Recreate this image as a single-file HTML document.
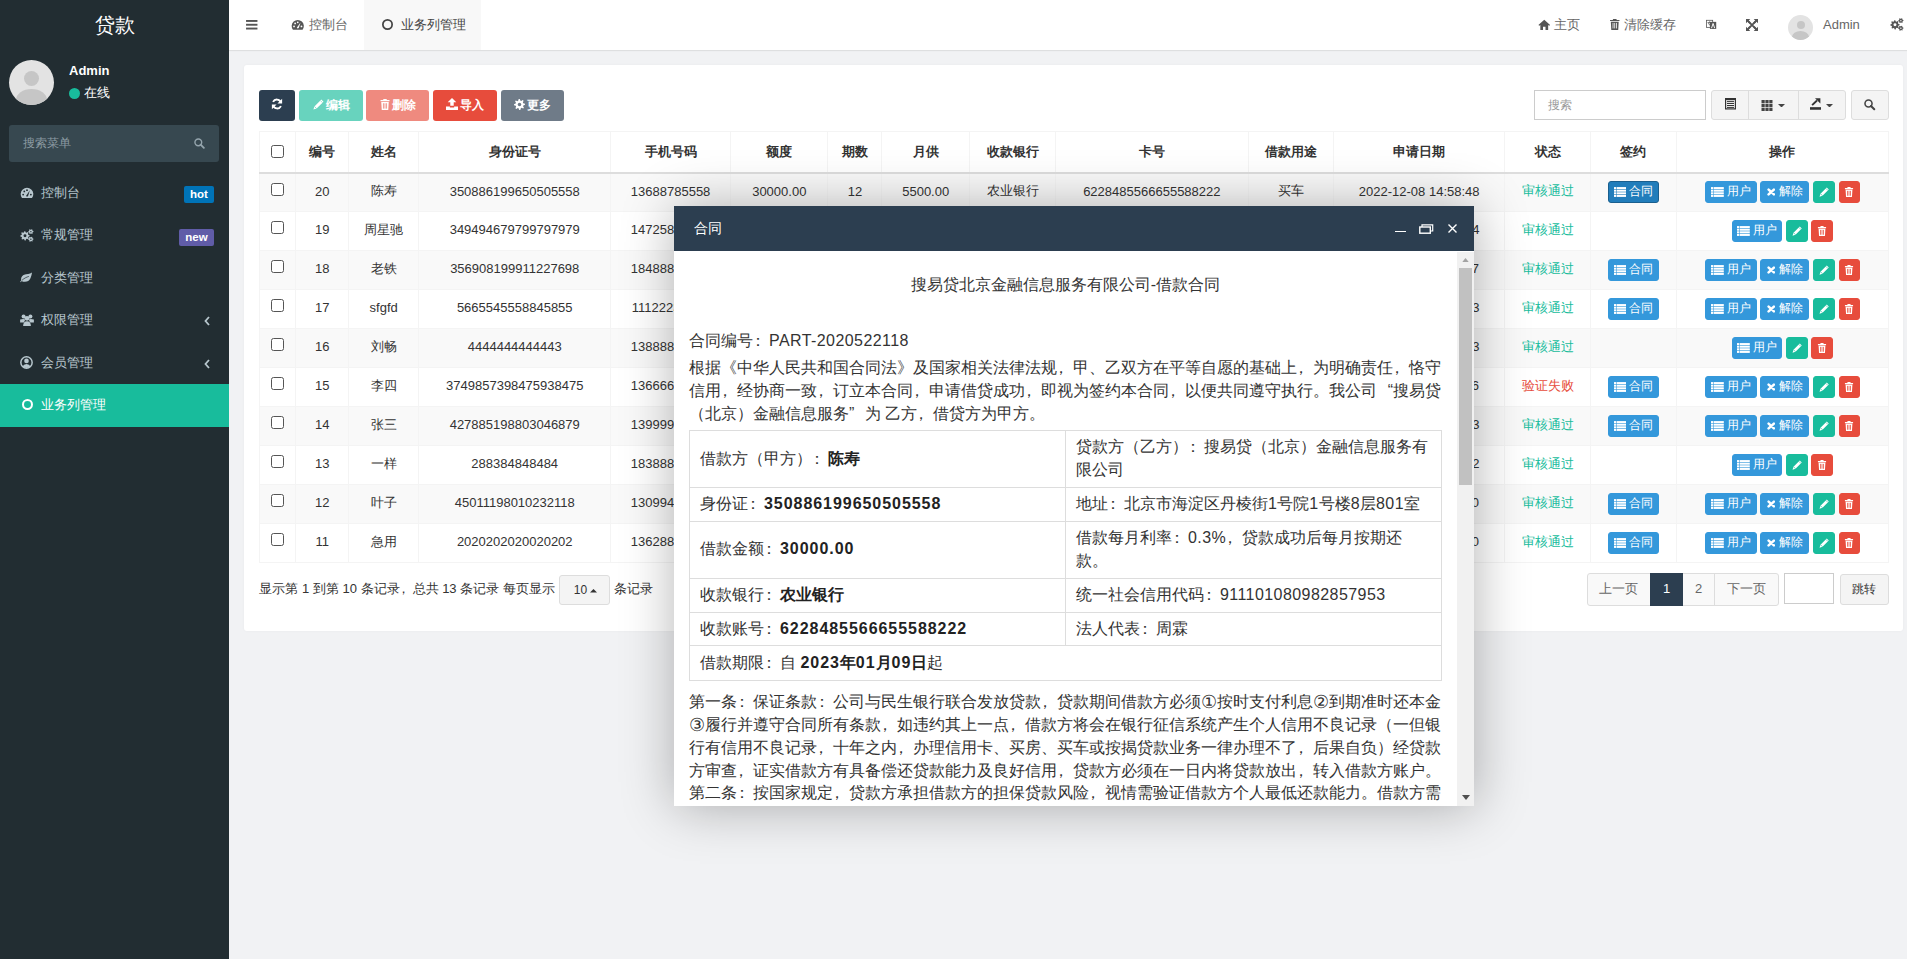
<!DOCTYPE html><html><head><meta charset="utf-8"><style>*{box-sizing:border-box}
html,body{margin:0;padding:0}
body{width:1907px;height:959px;overflow:hidden;position:relative;background:#f1f2f4;font-family:"Liberation Sans",sans-serif;font-size:13px;color:#333}
.abs{position:absolute}
#sb{position:absolute;left:0;top:0;width:229px;height:959px;background:#222d32}
#logo{position:absolute;left:0;top:0;width:229px;height:50px;line-height:50px;text-align:center;color:#fff;font-size:20px}
.av{position:absolute;border-radius:50%;background:#e3e3e3;overflow:hidden}
.av .hd{position:absolute;border-radius:50%;background:#c6c6c6}
.av .bd{position:absolute;border-radius:50%;background:#c6c6c6}
.menu{position:absolute;left:0;width:229px;height:42.5px;color:#b8c7ce;font-size:13px}
.menu .ic{position:absolute;left:20px;top:14px}
.menu .tx{position:absolute;left:41px;top:0;line-height:42.5px}
.menu.on{background:#18bc9c;color:#fff}
.lbl{position:absolute;right:15px;height:17px;line-height:17px;font-size:11.5px;font-weight:bold;color:#fff;border-radius:2px;text-align:center}
#hd{position:absolute;left:229px;top:0;width:1678px;height:50px;background:#fff;box-shadow:0 1px 1px rgba(0,0,0,.08)}
.nav{position:absolute;top:0;height:50px;line-height:50px;color:#666;font-size:13px}
#panel{position:absolute;left:244px;top:65px;width:1659px;height:566px;background:#fff;border-radius:3px;box-shadow:0 0 3px rgba(0,0,0,.04)}
.tb{position:absolute;top:90px;height:30.5px;border-radius:3px;color:#fff;font-size:12px;line-height:30.5px}
.tb svg{display:inline-block!important;vertical-align:-1px}
table.dt{position:absolute;left:259.4px;top:131.3px;border-collapse:collapse;table-layout:fixed;width:1629px}
.dt th{height:41px;font-weight:bold;text-align:center;border-left:1px solid #f4f4f4;border-right:1px solid #f4f4f4;border-top:1px solid #f4f4f4;border-bottom:2px solid #ddd;padding:0;font-size:13px;color:#333}
.dt td{height:39px;text-align:center;border:1px solid #f4f4f4;padding:0 0 3px 0;white-space:nowrap;overflow:hidden;font-size:13px;color:#333}
.dt tr.odd td{background:#f9f9f9}
.cb{display:inline-block;width:13px;height:13px;border:1px solid #555;border-radius:2.5px;background:#fff;vertical-align:middle}
.bx{position:relative;top:1px;display:inline-block;height:22px;line-height:20px;font-size:12px;color:#fff;border-radius:3px;vertical-align:middle;border:1px solid transparent;text-align:left;margin:0}
.bx svg{display:inline-block!important;vertical-align:-1px}
.binfo{background:#3498db;border-color:#3498db}
.bsucc{background:#18bc9c;border-color:#18bc9c}
.bdang{background:#e74c3c;border-color:#e74c3c}
.ok{color:#18bc9c}.fail{color:#e74c3c}
#modal{position:absolute;left:674px;top:206px;width:800px;height:600px;background:#fff;box-shadow:1px 1px 50px rgba(0,0,0,.3)}
#mtitle{position:absolute;left:0;top:0;width:800px;height:45px;background:#2c3e50;color:#fff;font-size:14px;line-height:44px;padding-left:20px}
#mbody{position:absolute;left:0;top:45px;width:783px;height:555px;overflow:hidden}
#mscroll{position:absolute;left:783px;top:46px;width:17px;height:554px;background:#f1f1f1}
.mc{position:absolute;left:15px;width:753px;font-size:16px;line-height:22.86px;color:#333}
table.ct{position:absolute;left:15px;border-collapse:collapse;table-layout:fixed;width:752px}
.ct td{border:1px solid #ddd;padding:5px 10px;font-size:16px;line-height:22.86px;vertical-align:middle;color:#333}
.ct b{font-weight:bold;color:#222}
.ql{display:inline-block;width:16px;text-align:right}
.qr{display:inline-block;width:16px;text-align:left}
.ls{letter-spacing:.43px}
.lsb{letter-spacing:.95px}
.cn{display:inline-block;width:16px;text-align:center;transform:scale(1.12)}
.pc{position:relative;left:-4.5px}.pk{position:relative;left:-3.5px}
</style></head><body><div id="sb"><div id="logo" style="left:0.5px">贷款</div><div class="av" style="left:9px;top:60px;width:45px;height:45px"><div class="hd" style="left:15px;top:11px;width:15px;height:15px"></div><div class="bd" style="left:7px;top:29px;width:31px;height:22px"></div></div><div class="abs" style="left:69px;top:62px;color:#fff;font-weight:bold;font-size:13px;line-height:18px">Admin</div><div class="abs" style="left:69px;top:88px;width:11px;height:11px;border-radius:50%;background:#18bc9c"></div><div class="abs" style="left:84px;top:84px;color:#fff;font-size:13px;line-height:18px">在线</div><div class="abs" style="left:9px;top:125px;width:210px;height:36.5px;background:#374850;border-radius:3px"></div><div class="abs" style="left:23px;top:134px;color:#8c9ba2;font-size:12px;line-height:19px">搜索菜单</div><div class="abs" style="left:194px;top:138px"><svg width="11" height="11" viewBox="0 0 14 14" style="display:block;"><circle cx="5.5" cy="5.5" r="4.3" fill="none" stroke="#95a5ad" stroke-width="1.8"/><path d="M8.5 8.5 L12.5 12.5" stroke="#95a5ad" stroke-width="2.4" stroke-linecap="round"/></svg></div><div class="menu" style="top:171.5px"><div class="ic" style="top:15.75px;left:20px"><svg width="14" height="11" viewBox="0 0 16 12.5" style="display:block;"><path d="M2.3 12.5 A7.2 7.2 0 1 1 13.7 12.5 Z" fill="#b8c7ce"/><circle cx="3.6" cy="8.6" r="1.05" fill="#222d32"/><circle cx="4.9" cy="5" r="1.05" fill="#222d32"/><circle cx="8" cy="3.6" r="1.05" fill="#222d32"/><circle cx="12.4" cy="8.6" r="1.05" fill="#222d32"/><path d="M11.3 3.8 L9.2 10.3 Q8 11.5 6.9 10.2 Z" fill="#222d32"/></svg></div><div class="tx">控制台</div><div class="lbl" style="left:184px;top:14.5px;width:30px;background:#0073b7">hot</div></div><div class="menu" style="top:214.0px"><div class="ic" style="top:14.75px;left:20px"><svg width="14" height="13" viewBox="0 0 17.2 16.8" style="display:block;"><polygon points="11.94,7.92 11.99,9.09 10.37,9.89 10.07,10.72 10.82,12.37 10.03,13.25 8.31,12.66 7.52,13.04 6.88,14.74 5.71,14.79 4.91,13.17 4.08,12.87 2.43,13.62 1.55,12.83 2.14,11.11 1.76,10.32 0.06,9.68 0.01,8.51 1.63,7.71 1.93,6.88 1.18,5.23 1.97,4.35 3.69,4.94 4.48,4.56 5.12,2.86 6.29,2.81 7.09,4.43 7.92,4.73 9.57,3.98 10.45,4.77 9.86,6.49 10.24,7.28" fill="#b8c7ce"/><circle cx="6" cy="8.8" r="1.9" fill="#222d32"/><polygon points="16.93,2.74 16.99,3.62 15.97,4.20 15.68,4.79 15.84,5.96 15.10,6.45 14.09,5.85 13.44,5.89 12.51,6.62 11.71,6.23 11.72,5.05 11.36,4.51 10.27,4.06 10.21,3.18 11.23,2.60 11.52,2.01 11.36,0.84 12.10,0.35 13.11,0.95 13.76,0.91 14.69,0.18 15.49,0.57 15.48,1.75 15.84,2.29" fill="#b8c7ce"/><circle cx="13.6" cy="3.4" r="0.9" fill="#222d32"/><polygon points="16.93,12.54 16.99,13.42 15.97,14.00 15.68,14.59 15.84,15.76 15.10,16.25 14.09,15.65 13.44,15.69 12.51,16.42 11.71,16.03 11.72,14.85 11.36,14.31 10.27,13.86 10.21,12.98 11.23,12.40 11.52,11.81 11.36,10.64 12.10,10.15 13.11,10.75 13.76,10.71 14.69,9.98 15.49,10.37 15.48,11.55 15.84,12.09" fill="#b8c7ce"/><circle cx="13.6" cy="13.2" r="0.9" fill="#222d32"/></svg></div><div class="tx">常规管理</div><div class="lbl" style="left:179px;top:14.5px;width:35px;background:#605ca8">new</div></div><div class="menu" style="top:256.5px"><div class="ic" style="top:15.75px;left:20px"><svg width="13" height="11" viewBox="0 0 16 14" style="display:block;"><path d="M15 0.5 C14 6 13 12 6 12.5 C4 12.6 2.8 12 2 11.3 L0.6 13 L0 12.3 L1.4 10.6 C0.8 9 1.2 5 5 3.5 C8 2.3 12 3 15 0.5 Z" fill="#b8c7ce"/><path d="M2.2 10.6 C5 8 8 6.5 11 5.6" stroke="#222d32" stroke-width="0.9" fill="none"/></svg></div><div class="tx">分类管理</div></div><div class="menu" style="top:299.0px"><div class="ic" style="top:15.25px;left:20px"><svg width="14" height="12" viewBox="0 0 16 14" style="display:block;"><circle cx="4" cy="3" r="2.3" fill="#b8c7ce"/><circle cx="12" cy="3" r="2.3" fill="#b8c7ce"/><circle cx="8" cy="5" r="2.8" fill="#b8c7ce"/><path d="M0 6.5 Q4 5 6 6.5 L4.5 10 H0 Z" fill="#b8c7ce"/><path d="M16 6.5 Q12 5 10 6.5 L11.5 10 H16 Z" fill="#b8c7ce"/><path d="M3.5 14 Q3.5 8.5 8 8.5 Q12.5 8.5 12.5 14 Z" fill="#b8c7ce"/></svg></div><div class="tx">权限管理</div><div class="abs" style="left:204px;top:17px"><svg width="6" height="10" viewBox="0 0 6 10" style="display:block;"><path d="M5 1 L1.5 5 L5 9" fill="none" stroke="#b8c7ce" stroke-width="1.8"/></svg></div></div><div class="menu" style="top:341.5px"><div class="ic" style="top:14.75px;left:20px"><svg width="13" height="13" viewBox="0 0 14 14" style="display:block;"><circle cx="7" cy="7" r="6.1" fill="none" stroke="#b8c7ce" stroke-width="1.6"/><circle cx="7" cy="5.3" r="2.5" fill="#b8c7ce"/><path d="M2.8 11.3 Q3.8 8.6 7 8.6 Q10.2 8.6 11.2 11.3 Q7 14.5 2.8 11.3 Z" fill="#b8c7ce"/></svg></div><div class="tx">会员管理</div><div class="abs" style="left:204px;top:17px"><svg width="6" height="10" viewBox="0 0 6 10" style="display:block;"><path d="M5 1 L1.5 5 L5 9" fill="none" stroke="#b8c7ce" stroke-width="1.8"/></svg></div></div><div class="menu on" style="top:384.0px"><div class="ic" style="top:15.25px;left:21.5px"><svg width="11" height="11" viewBox="0 0 12 12" style="display:block;"><circle cx="6" cy="6" r="4.9" fill="none" stroke="#fff" stroke-width="2.2"/></svg></div><div class="tx">业务列管理</div></div></div><div id="hd"><div class="abs" style="left:17px;top:20px"><svg width="11.5" height="9.5" viewBox="0 0 12 10" style="display:block;"><rect x="0" y="0" width="12" height="2" fill="#555"/><rect x="0" y="4" width="12" height="2" fill="#555"/><rect x="0" y="8" width="12" height="2" fill="#555"/></svg></div><div class="abs" style="left:135px;top:0;width:117px;height:50px;background:#f8f8f8"></div><div class="abs" style="left:62px;top:19px"><svg width="13.5" height="11" viewBox="0 0 16 12.5" style="display:block;"><path d="M2.3 12.5 A7.2 7.2 0 1 1 13.7 12.5 Z" fill="#555"/><circle cx="3.6" cy="8.6" r="1.05" fill="#fff"/><circle cx="4.9" cy="5" r="1.05" fill="#fff"/><circle cx="8" cy="3.6" r="1.05" fill="#fff"/><circle cx="12.4" cy="8.6" r="1.05" fill="#fff"/><path d="M11.3 3.8 L9.2 10.3 Q8 11.5 6.9 10.2 Z" fill="#fff"/></svg></div><div class="nav" style="left:80px">控制台</div><div class="abs" style="left:153px;top:19px"><svg width="11" height="11" viewBox="0 0 12 12" style="display:block;"><circle cx="6" cy="6" r="5.05" fill="none" stroke="#444" stroke-width="1.9"/></svg></div><div class="nav" style="left:171.5px;color:#444">业务列管理</div><div class="abs" style="left:1309px;top:19px"><svg width="12.5" height="11" viewBox="0 0 16 14" style="display:block;"><path d="M8 1 L15.5 7.5 L14.3 8.7 L13 7.6 V14 H9.6 V10 H6.4 V14 H3 V7.6 L1.7 8.7 L0.5 7.5 Z" fill="#555"/></svg></div><div class="nav" style="left:1325px">主页</div><div class="abs" style="left:1381px;top:19px"><svg width="9.5" height="11" viewBox="0 0 12 14" style="display:block;"><path d="M4 0 H8 L8.6 1.2 H12 V2.6 H0 V1.2 H3.4 Z M1 3.4 H11 L10.4 14 H1.6 Z" fill="#555"/><rect x="3.3" y="5" width="1" height="7" fill="#fff"/><rect x="5.5" y="5" width="1" height="7" fill="#fff"/><rect x="7.7" y="5" width="1" height="7" fill="#fff"/></svg></div><div class="nav" style="left:1395px">清除缓存</div><div class="abs" style="left:1477px;top:18.5px"><svg width="11" height="12" viewBox="0 0 14 14" style="display:block;"><rect x="0.5" y="1" width="8" height="9" fill="none" stroke="#555" stroke-width="1"/><rect x="5" y="3" width="8" height="9" fill="#555"/><path d="M7 11 L9 5 L11 11" fill="none" stroke="#fff" stroke-width="1.2"/><path d="M2 4 H7 M4.5 2.5 V4 M3 4 Q4 8 7 8" fill="none" stroke="#555" stroke-width="1"/></svg></div><div class="abs" style="left:1517px;top:19px"><svg width="12" height="12" viewBox="0 0 14 14" style="display:block;"><path d="M0 0 H5 L3.3 1.7 L5.6 4 L4 5.6 L1.7 3.3 L0 5 Z M14 0 V5 L12.3 3.3 L10 5.6 L8.4 4 L10.7 1.7 L9 0 Z M0 14 V9 L1.7 10.7 L4 8.4 L5.6 10 L3.3 12.3 L5 14 Z M14 14 H9 L10.7 12.3 L8.4 10 L10 8.4 L12.3 10.7 L14 9 Z" fill="#555"/><path d="M3 3 L11 11 M11 3 L3 11" stroke="#555" stroke-width="2.2"/></svg></div><div class="av" style="left:1559px;top:15px;width:25px;height:25px"><div class="hd" style="left:8.5px;top:6px;width:8px;height:8px"></div><div class="bd" style="left:4px;top:16px;width:17px;height:12px"></div></div><div class="nav" style="left:1594px">Admin</div><div class="abs" style="left:1660.5px;top:18px"><svg width="14" height="13" viewBox="0 0 17.2 16.8" style="display:block;"><polygon points="11.94,7.92 11.99,9.09 10.37,9.89 10.07,10.72 10.82,12.37 10.03,13.25 8.31,12.66 7.52,13.04 6.88,14.74 5.71,14.79 4.91,13.17 4.08,12.87 2.43,13.62 1.55,12.83 2.14,11.11 1.76,10.32 0.06,9.68 0.01,8.51 1.63,7.71 1.93,6.88 1.18,5.23 1.97,4.35 3.69,4.94 4.48,4.56 5.12,2.86 6.29,2.81 7.09,4.43 7.92,4.73 9.57,3.98 10.45,4.77 9.86,6.49 10.24,7.28" fill="#555"/><circle cx="6" cy="8.8" r="1.9" fill="#fff"/><polygon points="16.93,2.74 16.99,3.62 15.97,4.20 15.68,4.79 15.84,5.96 15.10,6.45 14.09,5.85 13.44,5.89 12.51,6.62 11.71,6.23 11.72,5.05 11.36,4.51 10.27,4.06 10.21,3.18 11.23,2.60 11.52,2.01 11.36,0.84 12.10,0.35 13.11,0.95 13.76,0.91 14.69,0.18 15.49,0.57 15.48,1.75 15.84,2.29" fill="#555"/><circle cx="13.6" cy="3.4" r="0.9" fill="#fff"/><polygon points="16.93,12.54 16.99,13.42 15.97,14.00 15.68,14.59 15.84,15.76 15.10,16.25 14.09,15.65 13.44,15.69 12.51,16.42 11.71,16.03 11.72,14.85 11.36,14.31 10.27,13.86 10.21,12.98 11.23,12.40 11.52,11.81 11.36,10.64 12.10,10.15 13.11,10.75 13.76,10.71 14.69,9.98 15.49,10.37 15.48,11.55 15.84,12.09" fill="#555"/><circle cx="13.6" cy="13.2" r="0.9" fill="#fff"/></svg></div></div><div id="panel"></div><div class="tb" style="left:259px;width:36px;background:#2c3e50;opacity:1;text-align:center;display:flex;align-items:center;justify-content:center"><span style="display:inline-block;vertical-align:middle"><svg width="12" height="12" viewBox="0 0 14 14" style="display:block;"><path d="M11.6 5.2 A5 5 0 0 0 2.4 4.6" fill="none" stroke="#fff" stroke-width="2.2"/><path d="M13 1 V6.5 H7.5 Z" fill="#fff"/><path d="M2.4 8.8 A5 5 0 0 0 11.6 9.4" fill="none" stroke="#fff" stroke-width="2.2"/><path d="M1 13 V7.5 H6.5 Z" fill="#fff"/></svg></span></div><div class="tb" style="left:299px;width:64px;background:#18bc9c;opacity:0.65;text-align:center;display:flex;align-items:center;justify-content:center"><span style="display:inline-block;vertical-align:middle"><svg width="11" height="11" viewBox="0 0 14 14" style="display:block;"><path d="M10.6 0.6 L13.4 3.4 L4.6 12.2 L0.5 13.5 L1.8 9.4 Z" fill="#fff"/><path d="M1.8 9.4 L4.6 12.2" stroke="#18bc9c" stroke-width="0.9"/><path d="M9.3 1.9 L12.1 4.7" stroke="#18bc9c" stroke-width="0.8"/></svg></span><span style="vertical-align:middle;margin-left:2px;font-weight:bold">编辑</span></div><div class="tb" style="left:366px;width:63px;background:#e74c3c;opacity:0.65;text-align:center;display:flex;align-items:center;justify-content:center"><span style="display:inline-block;vertical-align:middle"><svg width="10" height="11" viewBox="0 0 12 13.5" style="display:block;"><path d="M4.2 0 H7.8 L8.4 1.3 H11.5 V2.9 H0.5 V1.3 H3.6 Z M1.4 3.6 H10.6 L10 13.5 H2 Z" fill="#fff"/><rect x="3.5" y="5.2" width="1" height="6.6" fill="#e74c3c"/><rect x="5.5" y="5.2" width="1" height="6.6" fill="#e74c3c"/><rect x="7.5" y="5.2" width="1" height="6.6" fill="#e74c3c"/></svg></span><span style="vertical-align:middle;margin-left:2px;font-weight:bold">删除</span></div><div class="tb" style="left:433px;width:64px;background:#e74c3c;opacity:1;text-align:center;display:flex;align-items:center;justify-content:center"><span style="display:inline-block;vertical-align:middle"><svg width="12" height="12" viewBox="0 0 14 14" style="display:block;"><path d="M7 0 L12 5 H9 V9 H5 V5 H2 Z" fill="#fff"/><path d="M0 10 H4.5 V11 H9.5 V10 H14 V14 H0 Z" fill="#fff"/></svg></span><span style="vertical-align:middle;margin-left:2px;font-weight:bold">导入</span></div><div class="tb" style="left:501px;width:63px;background:#6f7b88;opacity:1;text-align:center;display:flex;align-items:center;justify-content:center"><span style="display:inline-block;vertical-align:middle"><svg width="11" height="11" viewBox="0 0 14 14" style="display:block;"><polygon points="13.92,5.97 13.99,7.34 11.85,8.21 11.52,9.14 12.62,11.17 11.70,12.19 9.57,11.29 8.68,11.71 8.03,13.92 6.66,13.99 5.79,11.85 4.86,11.52 2.83,12.62 1.81,11.70 2.71,9.57 2.29,8.68 0.08,8.03 0.01,6.66 2.15,5.79 2.48,4.86 1.38,2.83 2.30,1.81 4.43,2.71 5.32,2.29 5.97,0.08 7.34,0.01 8.21,2.15 9.14,2.48 11.17,1.38 12.19,2.30 11.29,4.43 11.71,5.32" fill="#fff"/><circle cx="7" cy="7" r="2.2" fill="#6f7b88"/></svg></span><span style="vertical-align:middle;margin-left:2px;font-weight:bold">更多</span></div><div class="abs" style="left:1534.3px;top:90.4px;width:171.5px;height:30px;border:1px solid #ccc;background:#fff"></div><div class="abs" style="left:1547.5px;top:96px;font-size:12px;line-height:19px;color:#999">搜索</div><div class="abs" style="left:1711px;top:90.4px;width:135px;height:30px;border:1px solid #ddd;background:#f4f4f4;border-radius:3px"></div><div class="abs" style="left:1748px;top:90.4px;width:1px;height:30px;background:#ddd"></div><div class="abs" style="left:1797.5px;top:90.4px;width:1px;height:30px;background:#ddd"></div><div class="abs" style="left:1725.3px;top:98.3px"><svg width="11" height="11.5" viewBox="0 0 11 11.5" style="display:block;"><rect x="0" y="0" width="11" height="11.5" fill="#333"/><rect x="1.2" y="2" width="8.6" height="8.3" fill="#f4f4f4"/><rect x="2" y="2.8" width="7" height="1.1" fill="#333"/><rect x="2" y="4.9" width="7" height="1.1" fill="#333"/><rect x="2" y="7" width="7" height="1.1" fill="#333"/><rect x="2" y="9" width="7" height="0.9" fill="#333"/></svg></div><div class="abs" style="left:1761px;top:99.5px"><svg width="12" height="11" viewBox="0 0 13 13" style="display:block;"><rect x="0" y="0" width="3.8" height="3.8" fill="#444"/><rect x="0" y="4.6" width="3.8" height="3.8" fill="#444"/><rect x="0" y="9.2" width="3.8" height="3.8" fill="#444"/><rect x="4.6" y="0" width="3.8" height="3.8" fill="#444"/><rect x="4.6" y="4.6" width="3.8" height="3.8" fill="#444"/><rect x="4.6" y="9.2" width="3.8" height="3.8" fill="#444"/><rect x="9.2" y="0" width="3.8" height="3.8" fill="#444"/><rect x="9.2" y="4.6" width="3.8" height="3.8" fill="#444"/><rect x="9.2" y="9.2" width="3.8" height="3.8" fill="#444"/></svg></div><div class="abs" style="left:1777.5px;top:103.5px"><svg width="7" height="3.5" viewBox="0 0 8 4" style="display:block;"><path d="M0 0 L8 0 L4 4 Z" fill="#444"/></svg></div><div class="abs" style="left:1809.8px;top:98px"><svg width="11.5" height="12" viewBox="0 0 12 12" style="display:block;"><rect x="0" y="9.3" width="11.5" height="2.7" fill="#333"/><path d="M2.2 7.2 L7.3 2.4" stroke="#333" stroke-width="2"/><path d="M5.2 0 H10.8 V5.6 Z" fill="#333"/></svg></div><div class="abs" style="left:1825.5px;top:103.5px"><svg width="7" height="3.5" viewBox="0 0 8 4" style="display:block;"><path d="M0 0 L8 0 L4 4 Z" fill="#444"/></svg></div><div class="abs" style="left:1851.2px;top:90.4px;width:37.5px;height:30px;border:1px solid #ddd;background:#f4f4f4;border-radius:3px"></div><div class="abs" style="left:1864px;top:99px"><svg width="11.5" height="11.5" viewBox="0 0 14 14" style="display:block;"><circle cx="5.5" cy="5.5" r="4.3" fill="none" stroke="#444" stroke-width="1.9"/><path d="M8.5 8.5 L12.5 12.5" stroke="#444" stroke-width="2.5" stroke-linecap="round"/></svg></div><table class="dt"><colgroup><col style="width:36px"><col style="width:52.5px"><col style="width:70.5px"><col style="width:191.7px"><col style="width:120px"><col style="width:97.4px"><col style="width:53.9px"><col style="width:87.7px"><col style="width:86.1px"><col style="width:192.4px"><col style="width:85.5px"><col style="width:171.3px"><col style="width:85.6px"><col style="width:85.6px"><col style="width:212.8px"></colgroup><tr><th><span class="cb" style="vertical-align:-1px"></span></th><th>编号</th><th>姓名</th><th>身份证号</th><th>手机号码</th><th>额度</th><th>期数</th><th>月供</th><th>收款银行</th><th>卡号</th><th>借款用途</th><th>申请日期</th><th>状态</th><th>签约</th><th>操作</th></tr><tr class="odd"><td><span class="cb" style="vertical-align:1px"></span></td><td>20</td><td>陈寿</td><td>350886199650505558</td><td>13688785558</td><td>30000.00</td><td>12</td><td>5500.00</td><td>农业银行</td><td>6228485566655588222</td><td>买车</td><td>2022-12-08 14:58:48</td><td><span class="ok">审核通过</span></td><td style="font-size:0"><span class="bx binfo" style="width:51px;background:#217dbb;border-color:#1a5f8e"><span style="position:absolute;left:4.8px;top:0;height:20px;display:flex;align-items:center"><svg width="12.8" height="10" viewBox="0 0 13 10" style="display:block;"><rect x="0" y="0" width="2.4" height="2.05" fill="#fff"/><rect x="2.9" y="0" width="10.1" height="2.05" fill="#fff"/><rect x="0" y="2.65" width="2.4" height="2.05" fill="#fff"/><rect x="2.9" y="2.65" width="10.1" height="2.05" fill="#fff"/><rect x="0" y="5.3" width="2.4" height="2.05" fill="#fff"/><rect x="2.9" y="5.3" width="10.1" height="2.05" fill="#fff"/><rect x="0" y="7.95" width="2.4" height="2.05" fill="#fff"/><rect x="2.9" y="7.95" width="10.1" height="2.05" fill="#fff"/></svg></span><span style="position:absolute;left:20.5px;top:0;line-height:19px">合同</span></span></td><td style="font-size:0"><span class="bx binfo" style="width:51.6px;"><span style="position:absolute;left:4.8px;top:0;height:20px;display:flex;align-items:center"><svg width="12.8" height="10" viewBox="0 0 13 10" style="display:block;"><rect x="0" y="0" width="2.4" height="2.05" fill="#fff"/><rect x="2.9" y="0" width="10.1" height="2.05" fill="#fff"/><rect x="0" y="2.65" width="2.4" height="2.05" fill="#fff"/><rect x="2.9" y="2.65" width="10.1" height="2.05" fill="#fff"/><rect x="0" y="5.3" width="2.4" height="2.05" fill="#fff"/><rect x="2.9" y="5.3" width="10.1" height="2.05" fill="#fff"/><rect x="0" y="7.95" width="2.4" height="2.05" fill="#fff"/><rect x="2.9" y="7.95" width="10.1" height="2.05" fill="#fff"/></svg></span><span style="position:absolute;left:20.8px;top:0;line-height:19px">用户</span></span><span class="bx binfo" style="width:48.4px;margin-left:3.5px"><span style="position:absolute;left:5.4px;top:0;height:20px;display:flex;align-items:center"><svg width="8.5" height="8" viewBox="0 0 8.6 8.2" style="display:block;"><path d="M1.6 1.6 L7 6.6 M7 1.6 L1.6 6.6" stroke="#fff" stroke-width="2.6" stroke-linecap="round"/></svg></span><span style="position:absolute;left:18.2px;top:0;line-height:19px">解除</span></span><span class="bx bsucc" style="width:21.7px;margin-left:4.3px"><span style="position:absolute;left:4.6px;top:0;height:20px;display:flex;align-items:center"><svg width="10.4" height="10" viewBox="0 0 14 14" style="display:block;"><path d="M10.6 0.6 L13.4 3.4 L4.6 12.2 L0.5 13.5 L1.8 9.4 Z" fill="#fff"/><path d="M1.8 9.4 L4.6 12.2" stroke="#18bc9c" stroke-width="0.9"/><path d="M9.3 1.9 L12.1 4.7" stroke="#18bc9c" stroke-width="0.8"/></svg></span></span><span class="bx bdang" style="width:20.6px;margin-left:4.4px"><span style="position:absolute;left:4.1px;top:0;height:20px;display:flex;align-items:center"><svg width="10" height="10" viewBox="0 0 12 13.5" style="display:block;"><path d="M4.2 0 H7.8 L8.4 1.3 H11.5 V2.9 H0.5 V1.3 H3.6 Z M1.4 3.6 H10.6 L10 13.5 H2 Z" fill="#fff"/><rect x="3.5" y="5.2" width="1" height="6.6" fill="#e74c3c"/><rect x="5.5" y="5.2" width="1" height="6.6" fill="#e74c3c"/><rect x="7.5" y="5.2" width="1" height="6.6" fill="#e74c3c"/></svg></span></span></td></tr><tr class=""><td><span class="cb" style="vertical-align:1px"></span></td><td>19</td><td>周星驰</td><td>349494679799797979</td><td>14725836914</td><td>20000.00</td><td>12</td><td>3000.00</td><td>建设银行</td><td>6217000010012345678</td><td>装修</td><td>2022-12-07 10:21:14</td><td><span class="ok">审核通过</span></td><td></td><td style="font-size:0"><span class="bx binfo" style="width:50.5px;"><span style="position:absolute;left:4.8px;top:0;height:20px;display:flex;align-items:center"><svg width="12.8" height="10" viewBox="0 0 13 10" style="display:block;"><rect x="0" y="0" width="2.4" height="2.05" fill="#fff"/><rect x="2.9" y="0" width="10.1" height="2.05" fill="#fff"/><rect x="0" y="2.65" width="2.4" height="2.05" fill="#fff"/><rect x="2.9" y="2.65" width="10.1" height="2.05" fill="#fff"/><rect x="0" y="5.3" width="2.4" height="2.05" fill="#fff"/><rect x="2.9" y="5.3" width="10.1" height="2.05" fill="#fff"/><rect x="0" y="7.95" width="2.4" height="2.05" fill="#fff"/><rect x="2.9" y="7.95" width="10.1" height="2.05" fill="#fff"/></svg></span><span style="position:absolute;left:20.8px;top:0;line-height:19px">用户</span></span><span class="bx bsucc" style="width:21.7px;margin-left:4.2px"><span style="position:absolute;left:4.6px;top:0;height:20px;display:flex;align-items:center"><svg width="10.4" height="10" viewBox="0 0 14 14" style="display:block;"><path d="M10.6 0.6 L13.4 3.4 L4.6 12.2 L0.5 13.5 L1.8 9.4 Z" fill="#fff"/><path d="M1.8 9.4 L4.6 12.2" stroke="#18bc9c" stroke-width="0.9"/><path d="M9.3 1.9 L12.1 4.7" stroke="#18bc9c" stroke-width="0.8"/></svg></span></span><span class="bx bdang" style="width:21.7px;margin-left:3.4px"><span style="position:absolute;left:4.6px;top:0;height:20px;display:flex;align-items:center"><svg width="10" height="10" viewBox="0 0 12 13.5" style="display:block;"><path d="M4.2 0 H7.8 L8.4 1.3 H11.5 V2.9 H0.5 V1.3 H3.6 Z M1.4 3.6 H10.6 L10 13.5 H2 Z" fill="#fff"/><rect x="3.5" y="5.2" width="1" height="6.6" fill="#e74c3c"/><rect x="5.5" y="5.2" width="1" height="6.6" fill="#e74c3c"/><rect x="7.5" y="5.2" width="1" height="6.6" fill="#e74c3c"/></svg></span></span></td></tr><tr class="odd"><td><span class="cb" style="vertical-align:1px"></span></td><td>18</td><td>老铁</td><td>356908199911227698</td><td>18488812347</td><td>50000.00</td><td>24</td><td>2500.00</td><td>工商银行</td><td>6222021234567890127</td><td>旅游</td><td>2022-12-06 09:11:27</td><td><span class="ok">审核通过</span></td><td style="font-size:0"><span class="bx binfo" style="width:51px;"><span style="position:absolute;left:4.8px;top:0;height:20px;display:flex;align-items:center"><svg width="12.8" height="10" viewBox="0 0 13 10" style="display:block;"><rect x="0" y="0" width="2.4" height="2.05" fill="#fff"/><rect x="2.9" y="0" width="10.1" height="2.05" fill="#fff"/><rect x="0" y="2.65" width="2.4" height="2.05" fill="#fff"/><rect x="2.9" y="2.65" width="10.1" height="2.05" fill="#fff"/><rect x="0" y="5.3" width="2.4" height="2.05" fill="#fff"/><rect x="2.9" y="5.3" width="10.1" height="2.05" fill="#fff"/><rect x="0" y="7.95" width="2.4" height="2.05" fill="#fff"/><rect x="2.9" y="7.95" width="10.1" height="2.05" fill="#fff"/></svg></span><span style="position:absolute;left:20.5px;top:0;line-height:19px">合同</span></span></td><td style="font-size:0"><span class="bx binfo" style="width:51.6px;"><span style="position:absolute;left:4.8px;top:0;height:20px;display:flex;align-items:center"><svg width="12.8" height="10" viewBox="0 0 13 10" style="display:block;"><rect x="0" y="0" width="2.4" height="2.05" fill="#fff"/><rect x="2.9" y="0" width="10.1" height="2.05" fill="#fff"/><rect x="0" y="2.65" width="2.4" height="2.05" fill="#fff"/><rect x="2.9" y="2.65" width="10.1" height="2.05" fill="#fff"/><rect x="0" y="5.3" width="2.4" height="2.05" fill="#fff"/><rect x="2.9" y="5.3" width="10.1" height="2.05" fill="#fff"/><rect x="0" y="7.95" width="2.4" height="2.05" fill="#fff"/><rect x="2.9" y="7.95" width="10.1" height="2.05" fill="#fff"/></svg></span><span style="position:absolute;left:20.8px;top:0;line-height:19px">用户</span></span><span class="bx binfo" style="width:48.4px;margin-left:3.5px"><span style="position:absolute;left:5.4px;top:0;height:20px;display:flex;align-items:center"><svg width="8.5" height="8" viewBox="0 0 8.6 8.2" style="display:block;"><path d="M1.6 1.6 L7 6.6 M7 1.6 L1.6 6.6" stroke="#fff" stroke-width="2.6" stroke-linecap="round"/></svg></span><span style="position:absolute;left:18.2px;top:0;line-height:19px">解除</span></span><span class="bx bsucc" style="width:21.7px;margin-left:4.3px"><span style="position:absolute;left:4.6px;top:0;height:20px;display:flex;align-items:center"><svg width="10.4" height="10" viewBox="0 0 14 14" style="display:block;"><path d="M10.6 0.6 L13.4 3.4 L4.6 12.2 L0.5 13.5 L1.8 9.4 Z" fill="#fff"/><path d="M1.8 9.4 L4.6 12.2" stroke="#18bc9c" stroke-width="0.9"/><path d="M9.3 1.9 L12.1 4.7" stroke="#18bc9c" stroke-width="0.8"/></svg></span></span><span class="bx bdang" style="width:20.6px;margin-left:4.4px"><span style="position:absolute;left:4.1px;top:0;height:20px;display:flex;align-items:center"><svg width="10" height="10" viewBox="0 0 12 13.5" style="display:block;"><path d="M4.2 0 H7.8 L8.4 1.3 H11.5 V2.9 H0.5 V1.3 H3.6 Z M1.4 3.6 H10.6 L10 13.5 H2 Z" fill="#fff"/><rect x="3.5" y="5.2" width="1" height="6.6" fill="#e74c3c"/><rect x="5.5" y="5.2" width="1" height="6.6" fill="#e74c3c"/><rect x="7.5" y="5.2" width="1" height="6.6" fill="#e74c3c"/></svg></span></span></td></tr><tr class=""><td><span class="cb" style="vertical-align:1px"></span></td><td>17</td><td>sfgfd</td><td>5665545558845855</td><td>11122233343</td><td>10000.00</td><td>6</td><td>1800.00</td><td>农业银行</td><td>6228481234567891233</td><td>教育</td><td>2022-12-05 16:32:13</td><td><span class="ok">审核通过</span></td><td style="font-size:0"><span class="bx binfo" style="width:51px;"><span style="position:absolute;left:4.8px;top:0;height:20px;display:flex;align-items:center"><svg width="12.8" height="10" viewBox="0 0 13 10" style="display:block;"><rect x="0" y="0" width="2.4" height="2.05" fill="#fff"/><rect x="2.9" y="0" width="10.1" height="2.05" fill="#fff"/><rect x="0" y="2.65" width="2.4" height="2.05" fill="#fff"/><rect x="2.9" y="2.65" width="10.1" height="2.05" fill="#fff"/><rect x="0" y="5.3" width="2.4" height="2.05" fill="#fff"/><rect x="2.9" y="5.3" width="10.1" height="2.05" fill="#fff"/><rect x="0" y="7.95" width="2.4" height="2.05" fill="#fff"/><rect x="2.9" y="7.95" width="10.1" height="2.05" fill="#fff"/></svg></span><span style="position:absolute;left:20.5px;top:0;line-height:19px">合同</span></span></td><td style="font-size:0"><span class="bx binfo" style="width:51.6px;"><span style="position:absolute;left:4.8px;top:0;height:20px;display:flex;align-items:center"><svg width="12.8" height="10" viewBox="0 0 13 10" style="display:block;"><rect x="0" y="0" width="2.4" height="2.05" fill="#fff"/><rect x="2.9" y="0" width="10.1" height="2.05" fill="#fff"/><rect x="0" y="2.65" width="2.4" height="2.05" fill="#fff"/><rect x="2.9" y="2.65" width="10.1" height="2.05" fill="#fff"/><rect x="0" y="5.3" width="2.4" height="2.05" fill="#fff"/><rect x="2.9" y="5.3" width="10.1" height="2.05" fill="#fff"/><rect x="0" y="7.95" width="2.4" height="2.05" fill="#fff"/><rect x="2.9" y="7.95" width="10.1" height="2.05" fill="#fff"/></svg></span><span style="position:absolute;left:20.8px;top:0;line-height:19px">用户</span></span><span class="bx binfo" style="width:48.4px;margin-left:3.5px"><span style="position:absolute;left:5.4px;top:0;height:20px;display:flex;align-items:center"><svg width="8.5" height="8" viewBox="0 0 8.6 8.2" style="display:block;"><path d="M1.6 1.6 L7 6.6 M7 1.6 L1.6 6.6" stroke="#fff" stroke-width="2.6" stroke-linecap="round"/></svg></span><span style="position:absolute;left:18.2px;top:0;line-height:19px">解除</span></span><span class="bx bsucc" style="width:21.7px;margin-left:4.3px"><span style="position:absolute;left:4.6px;top:0;height:20px;display:flex;align-items:center"><svg width="10.4" height="10" viewBox="0 0 14 14" style="display:block;"><path d="M10.6 0.6 L13.4 3.4 L4.6 12.2 L0.5 13.5 L1.8 9.4 Z" fill="#fff"/><path d="M1.8 9.4 L4.6 12.2" stroke="#18bc9c" stroke-width="0.9"/><path d="M9.3 1.9 L12.1 4.7" stroke="#18bc9c" stroke-width="0.8"/></svg></span></span><span class="bx bdang" style="width:20.6px;margin-left:4.4px"><span style="position:absolute;left:4.1px;top:0;height:20px;display:flex;align-items:center"><svg width="10" height="10" viewBox="0 0 12 13.5" style="display:block;"><path d="M4.2 0 H7.8 L8.4 1.3 H11.5 V2.9 H0.5 V1.3 H3.6 Z M1.4 3.6 H10.6 L10 13.5 H2 Z" fill="#fff"/><rect x="3.5" y="5.2" width="1" height="6.6" fill="#e74c3c"/><rect x="5.5" y="5.2" width="1" height="6.6" fill="#e74c3c"/><rect x="7.5" y="5.2" width="1" height="6.6" fill="#e74c3c"/></svg></span></span></td></tr><tr class="odd"><td><span class="cb" style="vertical-align:1px"></span></td><td>16</td><td>刘畅</td><td>4444444444443</td><td>13888812343</td><td>30000.00</td><td>12</td><td>2700.00</td><td>中国银行</td><td>6013821234567891223</td><td>装修</td><td>2022-12-04 12:45:33</td><td><span class="ok">审核通过</span></td><td></td><td style="font-size:0"><span class="bx binfo" style="width:50.5px;"><span style="position:absolute;left:4.8px;top:0;height:20px;display:flex;align-items:center"><svg width="12.8" height="10" viewBox="0 0 13 10" style="display:block;"><rect x="0" y="0" width="2.4" height="2.05" fill="#fff"/><rect x="2.9" y="0" width="10.1" height="2.05" fill="#fff"/><rect x="0" y="2.65" width="2.4" height="2.05" fill="#fff"/><rect x="2.9" y="2.65" width="10.1" height="2.05" fill="#fff"/><rect x="0" y="5.3" width="2.4" height="2.05" fill="#fff"/><rect x="2.9" y="5.3" width="10.1" height="2.05" fill="#fff"/><rect x="0" y="7.95" width="2.4" height="2.05" fill="#fff"/><rect x="2.9" y="7.95" width="10.1" height="2.05" fill="#fff"/></svg></span><span style="position:absolute;left:20.8px;top:0;line-height:19px">用户</span></span><span class="bx bsucc" style="width:21.7px;margin-left:4.2px"><span style="position:absolute;left:4.6px;top:0;height:20px;display:flex;align-items:center"><svg width="10.4" height="10" viewBox="0 0 14 14" style="display:block;"><path d="M10.6 0.6 L13.4 3.4 L4.6 12.2 L0.5 13.5 L1.8 9.4 Z" fill="#fff"/><path d="M1.8 9.4 L4.6 12.2" stroke="#18bc9c" stroke-width="0.9"/><path d="M9.3 1.9 L12.1 4.7" stroke="#18bc9c" stroke-width="0.8"/></svg></span></span><span class="bx bdang" style="width:21.7px;margin-left:3.4px"><span style="position:absolute;left:4.6px;top:0;height:20px;display:flex;align-items:center"><svg width="10" height="10" viewBox="0 0 12 13.5" style="display:block;"><path d="M4.2 0 H7.8 L8.4 1.3 H11.5 V2.9 H0.5 V1.3 H3.6 Z M1.4 3.6 H10.6 L10 13.5 H2 Z" fill="#fff"/><rect x="3.5" y="5.2" width="1" height="6.6" fill="#e74c3c"/><rect x="5.5" y="5.2" width="1" height="6.6" fill="#e74c3c"/><rect x="7.5" y="5.2" width="1" height="6.6" fill="#e74c3c"/></svg></span></span></td></tr><tr class=""><td><span class="cb" style="vertical-align:1px"></span></td><td>15</td><td>李四</td><td>3749857398475938475</td><td>13666612346</td><td>20000.00</td><td>12</td><td>1900.00</td><td>招商银行</td><td>6214831234567891236</td><td>买车</td><td>2022-12-03 11:27:16</td><td><span class="fail">验证失败</span></td><td style="font-size:0"><span class="bx binfo" style="width:51px;"><span style="position:absolute;left:4.8px;top:0;height:20px;display:flex;align-items:center"><svg width="12.8" height="10" viewBox="0 0 13 10" style="display:block;"><rect x="0" y="0" width="2.4" height="2.05" fill="#fff"/><rect x="2.9" y="0" width="10.1" height="2.05" fill="#fff"/><rect x="0" y="2.65" width="2.4" height="2.05" fill="#fff"/><rect x="2.9" y="2.65" width="10.1" height="2.05" fill="#fff"/><rect x="0" y="5.3" width="2.4" height="2.05" fill="#fff"/><rect x="2.9" y="5.3" width="10.1" height="2.05" fill="#fff"/><rect x="0" y="7.95" width="2.4" height="2.05" fill="#fff"/><rect x="2.9" y="7.95" width="10.1" height="2.05" fill="#fff"/></svg></span><span style="position:absolute;left:20.5px;top:0;line-height:19px">合同</span></span></td><td style="font-size:0"><span class="bx binfo" style="width:51.6px;"><span style="position:absolute;left:4.8px;top:0;height:20px;display:flex;align-items:center"><svg width="12.8" height="10" viewBox="0 0 13 10" style="display:block;"><rect x="0" y="0" width="2.4" height="2.05" fill="#fff"/><rect x="2.9" y="0" width="10.1" height="2.05" fill="#fff"/><rect x="0" y="2.65" width="2.4" height="2.05" fill="#fff"/><rect x="2.9" y="2.65" width="10.1" height="2.05" fill="#fff"/><rect x="0" y="5.3" width="2.4" height="2.05" fill="#fff"/><rect x="2.9" y="5.3" width="10.1" height="2.05" fill="#fff"/><rect x="0" y="7.95" width="2.4" height="2.05" fill="#fff"/><rect x="2.9" y="7.95" width="10.1" height="2.05" fill="#fff"/></svg></span><span style="position:absolute;left:20.8px;top:0;line-height:19px">用户</span></span><span class="bx binfo" style="width:48.4px;margin-left:3.5px"><span style="position:absolute;left:5.4px;top:0;height:20px;display:flex;align-items:center"><svg width="8.5" height="8" viewBox="0 0 8.6 8.2" style="display:block;"><path d="M1.6 1.6 L7 6.6 M7 1.6 L1.6 6.6" stroke="#fff" stroke-width="2.6" stroke-linecap="round"/></svg></span><span style="position:absolute;left:18.2px;top:0;line-height:19px">解除</span></span><span class="bx bsucc" style="width:21.7px;margin-left:4.3px"><span style="position:absolute;left:4.6px;top:0;height:20px;display:flex;align-items:center"><svg width="10.4" height="10" viewBox="0 0 14 14" style="display:block;"><path d="M10.6 0.6 L13.4 3.4 L4.6 12.2 L0.5 13.5 L1.8 9.4 Z" fill="#fff"/><path d="M1.8 9.4 L4.6 12.2" stroke="#18bc9c" stroke-width="0.9"/><path d="M9.3 1.9 L12.1 4.7" stroke="#18bc9c" stroke-width="0.8"/></svg></span></span><span class="bx bdang" style="width:20.6px;margin-left:4.4px"><span style="position:absolute;left:4.1px;top:0;height:20px;display:flex;align-items:center"><svg width="10" height="10" viewBox="0 0 12 13.5" style="display:block;"><path d="M4.2 0 H7.8 L8.4 1.3 H11.5 V2.9 H0.5 V1.3 H3.6 Z M1.4 3.6 H10.6 L10 13.5 H2 Z" fill="#fff"/><rect x="3.5" y="5.2" width="1" height="6.6" fill="#e74c3c"/><rect x="5.5" y="5.2" width="1" height="6.6" fill="#e74c3c"/><rect x="7.5" y="5.2" width="1" height="6.6" fill="#e74c3c"/></svg></span></span></td></tr><tr class="odd"><td><span class="cb" style="vertical-align:1px"></span></td><td>14</td><td>张三</td><td>427885198803046879</td><td>13999912343</td><td>40000.00</td><td>24</td><td>2000.00</td><td>建设银行</td><td>6217001234567891233</td><td>旅游</td><td>2022-12-02 15:08:23</td><td><span class="ok">审核通过</span></td><td style="font-size:0"><span class="bx binfo" style="width:51px;"><span style="position:absolute;left:4.8px;top:0;height:20px;display:flex;align-items:center"><svg width="12.8" height="10" viewBox="0 0 13 10" style="display:block;"><rect x="0" y="0" width="2.4" height="2.05" fill="#fff"/><rect x="2.9" y="0" width="10.1" height="2.05" fill="#fff"/><rect x="0" y="2.65" width="2.4" height="2.05" fill="#fff"/><rect x="2.9" y="2.65" width="10.1" height="2.05" fill="#fff"/><rect x="0" y="5.3" width="2.4" height="2.05" fill="#fff"/><rect x="2.9" y="5.3" width="10.1" height="2.05" fill="#fff"/><rect x="0" y="7.95" width="2.4" height="2.05" fill="#fff"/><rect x="2.9" y="7.95" width="10.1" height="2.05" fill="#fff"/></svg></span><span style="position:absolute;left:20.5px;top:0;line-height:19px">合同</span></span></td><td style="font-size:0"><span class="bx binfo" style="width:51.6px;"><span style="position:absolute;left:4.8px;top:0;height:20px;display:flex;align-items:center"><svg width="12.8" height="10" viewBox="0 0 13 10" style="display:block;"><rect x="0" y="0" width="2.4" height="2.05" fill="#fff"/><rect x="2.9" y="0" width="10.1" height="2.05" fill="#fff"/><rect x="0" y="2.65" width="2.4" height="2.05" fill="#fff"/><rect x="2.9" y="2.65" width="10.1" height="2.05" fill="#fff"/><rect x="0" y="5.3" width="2.4" height="2.05" fill="#fff"/><rect x="2.9" y="5.3" width="10.1" height="2.05" fill="#fff"/><rect x="0" y="7.95" width="2.4" height="2.05" fill="#fff"/><rect x="2.9" y="7.95" width="10.1" height="2.05" fill="#fff"/></svg></span><span style="position:absolute;left:20.8px;top:0;line-height:19px">用户</span></span><span class="bx binfo" style="width:48.4px;margin-left:3.5px"><span style="position:absolute;left:5.4px;top:0;height:20px;display:flex;align-items:center"><svg width="8.5" height="8" viewBox="0 0 8.6 8.2" style="display:block;"><path d="M1.6 1.6 L7 6.6 M7 1.6 L1.6 6.6" stroke="#fff" stroke-width="2.6" stroke-linecap="round"/></svg></span><span style="position:absolute;left:18.2px;top:0;line-height:19px">解除</span></span><span class="bx bsucc" style="width:21.7px;margin-left:4.3px"><span style="position:absolute;left:4.6px;top:0;height:20px;display:flex;align-items:center"><svg width="10.4" height="10" viewBox="0 0 14 14" style="display:block;"><path d="M10.6 0.6 L13.4 3.4 L4.6 12.2 L0.5 13.5 L1.8 9.4 Z" fill="#fff"/><path d="M1.8 9.4 L4.6 12.2" stroke="#18bc9c" stroke-width="0.9"/><path d="M9.3 1.9 L12.1 4.7" stroke="#18bc9c" stroke-width="0.8"/></svg></span></span><span class="bx bdang" style="width:20.6px;margin-left:4.4px"><span style="position:absolute;left:4.1px;top:0;height:20px;display:flex;align-items:center"><svg width="10" height="10" viewBox="0 0 12 13.5" style="display:block;"><path d="M4.2 0 H7.8 L8.4 1.3 H11.5 V2.9 H0.5 V1.3 H3.6 Z M1.4 3.6 H10.6 L10 13.5 H2 Z" fill="#fff"/><rect x="3.5" y="5.2" width="1" height="6.6" fill="#e74c3c"/><rect x="5.5" y="5.2" width="1" height="6.6" fill="#e74c3c"/><rect x="7.5" y="5.2" width="1" height="6.6" fill="#e74c3c"/></svg></span></span></td></tr><tr class=""><td><span class="cb" style="vertical-align:1px"></span></td><td>13</td><td>一样</td><td>288384848484</td><td>18388812342</td><td>10000.00</td><td>6</td><td>1800.00</td><td>工商银行</td><td>6222021234567891232</td><td>教育</td><td>2022-12-01 13:39:52</td><td><span class="ok">审核通过</span></td><td></td><td style="font-size:0"><span class="bx binfo" style="width:50.5px;"><span style="position:absolute;left:4.8px;top:0;height:20px;display:flex;align-items:center"><svg width="12.8" height="10" viewBox="0 0 13 10" style="display:block;"><rect x="0" y="0" width="2.4" height="2.05" fill="#fff"/><rect x="2.9" y="0" width="10.1" height="2.05" fill="#fff"/><rect x="0" y="2.65" width="2.4" height="2.05" fill="#fff"/><rect x="2.9" y="2.65" width="10.1" height="2.05" fill="#fff"/><rect x="0" y="5.3" width="2.4" height="2.05" fill="#fff"/><rect x="2.9" y="5.3" width="10.1" height="2.05" fill="#fff"/><rect x="0" y="7.95" width="2.4" height="2.05" fill="#fff"/><rect x="2.9" y="7.95" width="10.1" height="2.05" fill="#fff"/></svg></span><span style="position:absolute;left:20.8px;top:0;line-height:19px">用户</span></span><span class="bx bsucc" style="width:21.7px;margin-left:4.2px"><span style="position:absolute;left:4.6px;top:0;height:20px;display:flex;align-items:center"><svg width="10.4" height="10" viewBox="0 0 14 14" style="display:block;"><path d="M10.6 0.6 L13.4 3.4 L4.6 12.2 L0.5 13.5 L1.8 9.4 Z" fill="#fff"/><path d="M1.8 9.4 L4.6 12.2" stroke="#18bc9c" stroke-width="0.9"/><path d="M9.3 1.9 L12.1 4.7" stroke="#18bc9c" stroke-width="0.8"/></svg></span></span><span class="bx bdang" style="width:21.7px;margin-left:3.4px"><span style="position:absolute;left:4.6px;top:0;height:20px;display:flex;align-items:center"><svg width="10" height="10" viewBox="0 0 12 13.5" style="display:block;"><path d="M4.2 0 H7.8 L8.4 1.3 H11.5 V2.9 H0.5 V1.3 H3.6 Z M1.4 3.6 H10.6 L10 13.5 H2 Z" fill="#fff"/><rect x="3.5" y="5.2" width="1" height="6.6" fill="#e74c3c"/><rect x="5.5" y="5.2" width="1" height="6.6" fill="#e74c3c"/><rect x="7.5" y="5.2" width="1" height="6.6" fill="#e74c3c"/></svg></span></span></td></tr><tr class="odd"><td><span class="cb" style="vertical-align:1px"></span></td><td>12</td><td>叶子</td><td>45011198010232118</td><td>13099412340</td><td>50000.00</td><td>36</td><td>1700.00</td><td>农业银行</td><td>6228481234567891230</td><td>买房</td><td>2022-11-30 10:56:40</td><td><span class="ok">审核通过</span></td><td style="font-size:0"><span class="bx binfo" style="width:51px;"><span style="position:absolute;left:4.8px;top:0;height:20px;display:flex;align-items:center"><svg width="12.8" height="10" viewBox="0 0 13 10" style="display:block;"><rect x="0" y="0" width="2.4" height="2.05" fill="#fff"/><rect x="2.9" y="0" width="10.1" height="2.05" fill="#fff"/><rect x="0" y="2.65" width="2.4" height="2.05" fill="#fff"/><rect x="2.9" y="2.65" width="10.1" height="2.05" fill="#fff"/><rect x="0" y="5.3" width="2.4" height="2.05" fill="#fff"/><rect x="2.9" y="5.3" width="10.1" height="2.05" fill="#fff"/><rect x="0" y="7.95" width="2.4" height="2.05" fill="#fff"/><rect x="2.9" y="7.95" width="10.1" height="2.05" fill="#fff"/></svg></span><span style="position:absolute;left:20.5px;top:0;line-height:19px">合同</span></span></td><td style="font-size:0"><span class="bx binfo" style="width:51.6px;"><span style="position:absolute;left:4.8px;top:0;height:20px;display:flex;align-items:center"><svg width="12.8" height="10" viewBox="0 0 13 10" style="display:block;"><rect x="0" y="0" width="2.4" height="2.05" fill="#fff"/><rect x="2.9" y="0" width="10.1" height="2.05" fill="#fff"/><rect x="0" y="2.65" width="2.4" height="2.05" fill="#fff"/><rect x="2.9" y="2.65" width="10.1" height="2.05" fill="#fff"/><rect x="0" y="5.3" width="2.4" height="2.05" fill="#fff"/><rect x="2.9" y="5.3" width="10.1" height="2.05" fill="#fff"/><rect x="0" y="7.95" width="2.4" height="2.05" fill="#fff"/><rect x="2.9" y="7.95" width="10.1" height="2.05" fill="#fff"/></svg></span><span style="position:absolute;left:20.8px;top:0;line-height:19px">用户</span></span><span class="bx binfo" style="width:48.4px;margin-left:3.5px"><span style="position:absolute;left:5.4px;top:0;height:20px;display:flex;align-items:center"><svg width="8.5" height="8" viewBox="0 0 8.6 8.2" style="display:block;"><path d="M1.6 1.6 L7 6.6 M7 1.6 L1.6 6.6" stroke="#fff" stroke-width="2.6" stroke-linecap="round"/></svg></span><span style="position:absolute;left:18.2px;top:0;line-height:19px">解除</span></span><span class="bx bsucc" style="width:21.7px;margin-left:4.3px"><span style="position:absolute;left:4.6px;top:0;height:20px;display:flex;align-items:center"><svg width="10.4" height="10" viewBox="0 0 14 14" style="display:block;"><path d="M10.6 0.6 L13.4 3.4 L4.6 12.2 L0.5 13.5 L1.8 9.4 Z" fill="#fff"/><path d="M1.8 9.4 L4.6 12.2" stroke="#18bc9c" stroke-width="0.9"/><path d="M9.3 1.9 L12.1 4.7" stroke="#18bc9c" stroke-width="0.8"/></svg></span></span><span class="bx bdang" style="width:20.6px;margin-left:4.4px"><span style="position:absolute;left:4.1px;top:0;height:20px;display:flex;align-items:center"><svg width="10" height="10" viewBox="0 0 12 13.5" style="display:block;"><path d="M4.2 0 H7.8 L8.4 1.3 H11.5 V2.9 H0.5 V1.3 H3.6 Z M1.4 3.6 H10.6 L10 13.5 H2 Z" fill="#fff"/><rect x="3.5" y="5.2" width="1" height="6.6" fill="#e74c3c"/><rect x="5.5" y="5.2" width="1" height="6.6" fill="#e74c3c"/><rect x="7.5" y="5.2" width="1" height="6.6" fill="#e74c3c"/></svg></span></span></td></tr><tr class=""><td><span class="cb" style="vertical-align:1px"></span></td><td>11</td><td>急用</td><td>2020202020020202</td><td>13628812340</td><td>30000.00</td><td>12</td><td>2700.00</td><td>中国银行</td><td>6013821234567891230</td><td>急用</td><td>2022-11-29 08:14:20</td><td><span class="ok">审核通过</span></td><td style="font-size:0"><span class="bx binfo" style="width:51px;"><span style="position:absolute;left:4.8px;top:0;height:20px;display:flex;align-items:center"><svg width="12.8" height="10" viewBox="0 0 13 10" style="display:block;"><rect x="0" y="0" width="2.4" height="2.05" fill="#fff"/><rect x="2.9" y="0" width="10.1" height="2.05" fill="#fff"/><rect x="0" y="2.65" width="2.4" height="2.05" fill="#fff"/><rect x="2.9" y="2.65" width="10.1" height="2.05" fill="#fff"/><rect x="0" y="5.3" width="2.4" height="2.05" fill="#fff"/><rect x="2.9" y="5.3" width="10.1" height="2.05" fill="#fff"/><rect x="0" y="7.95" width="2.4" height="2.05" fill="#fff"/><rect x="2.9" y="7.95" width="10.1" height="2.05" fill="#fff"/></svg></span><span style="position:absolute;left:20.5px;top:0;line-height:19px">合同</span></span></td><td style="font-size:0"><span class="bx binfo" style="width:51.6px;"><span style="position:absolute;left:4.8px;top:0;height:20px;display:flex;align-items:center"><svg width="12.8" height="10" viewBox="0 0 13 10" style="display:block;"><rect x="0" y="0" width="2.4" height="2.05" fill="#fff"/><rect x="2.9" y="0" width="10.1" height="2.05" fill="#fff"/><rect x="0" y="2.65" width="2.4" height="2.05" fill="#fff"/><rect x="2.9" y="2.65" width="10.1" height="2.05" fill="#fff"/><rect x="0" y="5.3" width="2.4" height="2.05" fill="#fff"/><rect x="2.9" y="5.3" width="10.1" height="2.05" fill="#fff"/><rect x="0" y="7.95" width="2.4" height="2.05" fill="#fff"/><rect x="2.9" y="7.95" width="10.1" height="2.05" fill="#fff"/></svg></span><span style="position:absolute;left:20.8px;top:0;line-height:19px">用户</span></span><span class="bx binfo" style="width:48.4px;margin-left:3.5px"><span style="position:absolute;left:5.4px;top:0;height:20px;display:flex;align-items:center"><svg width="8.5" height="8" viewBox="0 0 8.6 8.2" style="display:block;"><path d="M1.6 1.6 L7 6.6 M7 1.6 L1.6 6.6" stroke="#fff" stroke-width="2.6" stroke-linecap="round"/></svg></span><span style="position:absolute;left:18.2px;top:0;line-height:19px">解除</span></span><span class="bx bsucc" style="width:21.7px;margin-left:4.3px"><span style="position:absolute;left:4.6px;top:0;height:20px;display:flex;align-items:center"><svg width="10.4" height="10" viewBox="0 0 14 14" style="display:block;"><path d="M10.6 0.6 L13.4 3.4 L4.6 12.2 L0.5 13.5 L1.8 9.4 Z" fill="#fff"/><path d="M1.8 9.4 L4.6 12.2" stroke="#18bc9c" stroke-width="0.9"/><path d="M9.3 1.9 L12.1 4.7" stroke="#18bc9c" stroke-width="0.8"/></svg></span></span><span class="bx bdang" style="width:20.6px;margin-left:4.4px"><span style="position:absolute;left:4.1px;top:0;height:20px;display:flex;align-items:center"><svg width="10" height="10" viewBox="0 0 12 13.5" style="display:block;"><path d="M4.2 0 H7.8 L8.4 1.3 H11.5 V2.9 H0.5 V1.3 H3.6 Z M1.4 3.6 H10.6 L10 13.5 H2 Z" fill="#fff"/><rect x="3.5" y="5.2" width="1" height="6.6" fill="#e74c3c"/><rect x="5.5" y="5.2" width="1" height="6.6" fill="#e74c3c"/><rect x="7.5" y="5.2" width="1" height="6.6" fill="#e74c3c"/></svg></span></span></td></tr></table><div class="abs" style="left:259.4px;top:580px;font-size:13px;line-height:18px;color:#333">显示第 1 到第 10 条记录<span style="position:relative;left:-3px">，</span>总共 13 条记录 每页显示</div><div class="abs" style="left:559.4px;top:575.3px;width:50.5px;height:30px;border:1px solid #ddd;background:#f4f4f4;border-radius:3px"></div><div class="abs" style="left:573.8px;top:580px;font-size:12px;line-height:20px;color:#333">10</div><div class="abs" style="left:590px;top:589px"><svg width="7" height="3.5" viewBox="0 0 8 4" style="display:block;"><path d="M0 4 L4 0 L8 4 Z" fill="#333"/></svg></div><div class="abs" style="left:614.4px;top:580px;font-size:13px;line-height:18px;color:#333">条记录</div><div class="abs" style="left:1586.5px;top:573.2px;width:192px;height:32.4px;border:1px solid #ddd;background:#f9f9f9;border-radius:3px"></div><div class="abs" style="left:1650.2px;top:573.2px;width:32.8px;height:32.4px;background:#2c3e50;color:#fff;text-align:center;line-height:32px;font-size:13px">1</div><div class="abs" style="left:1714.3px;top:573.2px;width:1px;height:32.4px;background:#ddd"></div><div class="abs" style="left:1586.5px;top:573.2px;width:63.7px;height:32.4px;color:#666;text-align:center;line-height:32px;font-size:13px">上一页</div><div class="abs" style="left:1683px;top:573.2px;width:31.3px;height:32.4px;color:#666;text-align:center;line-height:32px;font-size:13px">2</div><div class="abs" style="left:1714.3px;top:573.2px;width:64.3px;height:32.4px;color:#666;text-align:center;line-height:32px;font-size:13px">下一页</div><div class="abs" style="left:1784px;top:573.2px;width:49.6px;height:30.4px;border:1px solid #ccc;background:#fff"></div><div class="abs" style="left:1839.5px;top:574px;width:49px;height:30.5px;border:1px solid #ddd;background:#f4f4f4;border-radius:3px;color:#333;text-align:center;line-height:28.5px;font-size:12px">跳转</div><div id="modal"><div id="mtitle">合同</div><div class="abs" style="left:720.6px;top:24.5px;width:11px;height:1.6px;background:#fff"></div><div class="abs" style="left:745px;top:17.6px"><svg width="14.5" height="10" viewBox="0 0 14.5 10" style="display:block"><rect x="0.8" y="3" width="10.5" height="6.2" fill="none" stroke="#fff" stroke-width="1.4"/><path d="M3 3 V0.8 H13.7 V7 H11.3" fill="none" stroke="#fff" stroke-width="1.2"/></svg></div><div class="abs" style="left:773.8px;top:17.8px"><svg width="9" height="9" viewBox="0 0 9 9" style="display:block"><path d="M0.5 0.5 L8.5 8.5 M8.5 0.5 L0.5 8.5" stroke="#fff" stroke-width="1.4"/></svg></div><div id="mbody"><div class="mc" style="top:22.600000000000023px;text-align:center">搜易贷北京金融信息服务有限公司-借款合同</div><div class="mc" style="top:78.5px">合同编号<span class="pk">：</span><span class="ls">PART-2020522118</span></div><div class="mc" style="top:106px">根据《中华人民共和国合同法》及国家相关法律法规<span class="pc">，</span>甲、乙双方在平等自愿的基础上<span class="pc">，</span>为明确责任<span class="pc">，</span>恪守信用<span class="pc">，</span>经协商一致<span class="pc">，</span>订立本合同<span class="pc">，</span>申请借贷成功<span class="pc">，</span>即视为签约本合同<span class="pc">，</span>以便共同遵守执行。我公司<span class="ql">“</span>搜易贷（北京）金融信息服务<span class="qr">”</span>为 乙方<span class="pc">，</span>借贷方为甲方。</div><table class="ct" style="top:179.3px"><colgroup><col style="width:376px"><col style="width:376px"></colgroup>
<tr><td style="height:56.5px">借款方（甲方）<span class="pk">：</span><b>陈寿</b></td><td>贷款方（乙方）<span class="pk">：</span>搜易贷（北京）金融信息服务有限公司</td></tr>
<tr><td style="height:33.8px">身份证<span class="pk">：</span><b class="lsb">350886199650505558</b></td><td>地址<span class="pk">：</span>北京市海淀区丹棱街<span class="ls">1</span>号院<span class="ls">1</span>号楼<span class="ls">8</span>层<span class="ls">801</span>室</td></tr>
<tr><td style="height:56.9px">借款金额<span class="pk">：</span><b class="lsb">30000.00</b></td><td>借款每月利率<span class="pk">：</span><span class="ls">0.3%</span><span class="pc">，</span>贷款成功后每月按期还款。</td></tr>
<tr><td style="height:33.5px">收款银行<span class="pk">：</span><b>农业银行</b></td><td>统一社会信用代码<span class="pk">：</span><span class="ls">911101080982857953</span></td></tr>
<tr><td style="height:33.8px">收款账号<span class="pk">：</span><b class="lsb">6228485566655588222</b></td><td>法人代表<span class="pk">：</span>周霖</td></tr>
<tr><td colspan="2" style="height:34.4px">借款期限<span class="pk">：</span>自 <b><span class="lsb">2023</span>年<span class="lsb">01</span>月<span class="lsb">09</span>日</b>起</td></tr>
</table><div class="mc" style="top:440px">第一条<span class="pk">：</span>保证条款<span class="pk">：</span>公司与民生银行联合发放贷款<span class="pc">，</span>贷款期间借款方必须<span class="cn">①</span>按时支付利息<span class="cn">②</span>到期准时还本金<span class="cn">③</span>履行并遵守合同所有条款<span class="pc">，</span>如违约其上一点<span class="pc">，</span>借款方将会在银行征信系统产生个人信用不良记录（一但银行有信用不良记录<span class="pc">，</span>十年之内<span class="pc">，</span>办理信用卡、买房、买车或按揭贷款业务一律办理不了<span class="pc">，</span>后果自负）经贷款方审查<span class="pc">，</span>证实借款方有具备偿还贷款能力及良好信用<span class="pc">，</span>贷款方必须在一日内将贷款放出<span class="pc">，</span>转入借款方账户。<br>第二条<span class="pk">：</span>按国家规定<span class="pc">，</span>贷款方承担借款方的担保贷款风险<span class="pc">，</span>视情需验证借款方个人最低还款能力。借款方需按照合同约定支付相关费用。</div></div><div id="mscroll"></div><div class="abs" style="left:785px;top:62px;width:12.7px;height:216.6px;background:#c1c1c1"></div><div class="abs" style="left:788px;top:51.8px"><svg width="7" height="4.2" viewBox="0 0 8 5" style="display:block"><path d="M0 5 L4 0 L8 5Z" fill="#a3a3a3"/></svg></div><div class="abs" style="left:787.5px;top:589px"><svg width="8" height="5" viewBox="0 0 8 5" style="display:block"><path d="M0 0 L8 0 L4 5Z" fill="#505050"/></svg></div></div></body></html>
